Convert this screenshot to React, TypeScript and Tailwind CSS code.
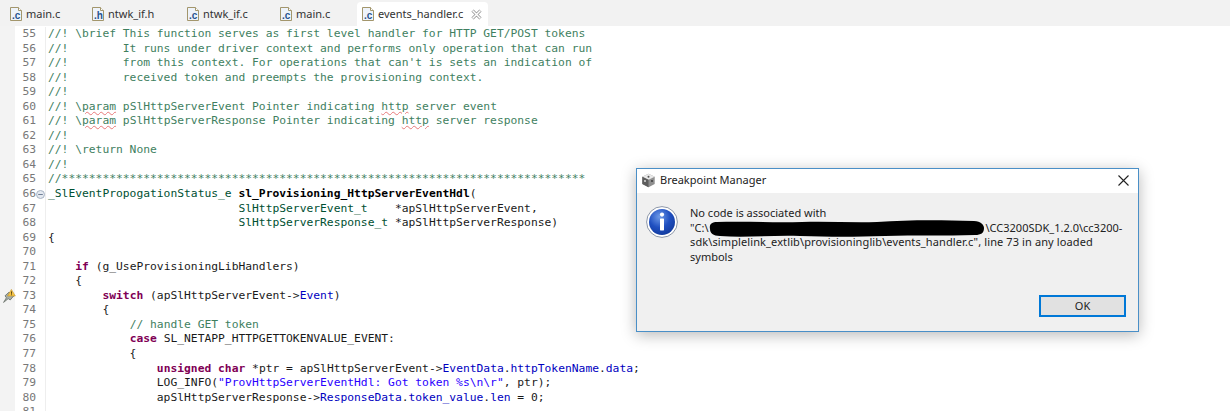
const MONO = "font-['DejaVu_Sans_Mono',monospace]"

type Tok = [string, string?]

const c = 'text-[#3f7f5f]'
const k = 'text-[#7f0055] font-bold'
const t = 'text-[#005032]'
const f = 'text-[#0000c0]'
const s = 'text-[#2a00ff]'
const b = 'text-black font-bold'
const sq = 'text-[#3f7f5f] underline decoration-wavy decoration-[#e87a7a] decoration-1'

const lines: { n: number; toks: Tok[] }[] = [
  { n: 55, toks: [["//! \\brief This function serves as first level handler for HTTP GET/POST tokens", c]] },
  { n: 56, toks: [["//!        It runs under driver context and performs only operation that can run", c]] },
  { n: 57, toks: [["//!        from this context. For operations that can't is sets an indication of", c]] },
  { n: 58, toks: [["//!        received token and preempts the provisioning context.", c]] },
  { n: 59, toks: [["//!", c]] },
  { n: 60, toks: [["//! \\", c], ["param", sq], [" pSlHttpServerEvent Pointer indicating ", c], ["http", sq], [" server event", c]] },
  { n: 61, toks: [["//! \\", c], ["param", sq], [" pSlHttpServerResponse Pointer indicating ", c], ["http", sq], [" server response", c]] },
  { n: 62, toks: [["//!", c]] },
  { n: 63, toks: [["//! \\return None", c]] },
  { n: 64, toks: [["//!", c]] },
  { n: 65, toks: [["//*****************************************************************************", c]] },
  { n: 66, toks: [["_SlEventPropogationStatus_e", t], [" "], ["sl_Provisioning_HttpServerEventHdl", b], ["("]] },
  { n: 67, toks: [["                            "], ["SlHttpServerEvent_t", t], ["    *apSlHttpServerEvent,"]] },
  { n: 68, toks: [["                            "], ["SlHttpServerResponse_t", t], [" *apSlHttpServerResponse)"]] },
  { n: 69, toks: [["{"]] },
  { n: 70, toks: [] },
  { n: 71, toks: [["    "], ["if", k], [" (g_UseProvisioningLibHandlers)"]] },
  { n: 72, toks: [["    {"]] },
  { n: 73, toks: [["        "], ["switch", k], [" (apSlHttpServerEvent->"], ["Event", f], [")"]] },
  { n: 74, toks: [["        {"]] },
  { n: 75, toks: [["            "], ["// handle GET token", c]] },
  { n: 76, toks: [["            "], ["case", k], [" SL_NETAPP_HTTPGETTOKENVALUE_EVENT:"]] },
  { n: 77, toks: [["            {"]] },
  { n: 78, toks: [["                "], ["unsigned", k], [" "], ["char", k], [" *ptr = apSlHttpServerEvent->"], ["EventData", f], ["."], ["httpTokenName", f], ["."], ["data", f], [";"]] },
  { n: 79, toks: [["                LOG_INFO("], ['"ProvHttpServerEventHdl: Got token %s\\n\\r"', s], [", ptr);"]] },
  { n: 80, toks: [["                apSlHttpServerResponse->"], ["ResponseData", f], ["."], ["token_value", f], ["."], ["len", f], [" = 0;"]] },
  { n: 81, toks: [] },
]

function FileIcon({ letter }: { letter: string }) {
  return (
    <svg width="12" height="14" viewBox="0 0 12 14" className="shrink-0">
      <path d="M0.5 0.5h8l3 3v10h-11z" fill="#eef3fa" stroke="#a3966c" />
      <path d="M8.5 0.5v3h3" fill="#fff" stroke="#a3966c" />
      <text x="2" y="11.5" fontFamily="Liberation Sans, sans-serif" fontSize="10" fontWeight="700" fill="#27548f">
        .{letter}
      </text>
    </svg>
  )
}

function Tab({ name, letter, width, active }: { name: string; letter: string; width: number; active?: boolean }) {
  return (
    <div
      className={
        active
          ? 'flex h-[24px] items-center gap-[4px] rounded-t-[4px] bg-white pl-[5px]'
          : 'flex h-[24px] items-center gap-[4px] pl-[10px]'
      }
      style={{ width }}
    >
      <FileIcon letter={letter} />
      <span className="text-[11px] text-[#333]">{name}</span>
      {active && (
        <svg width="11" height="11" viewBox="0 0 11 11" className="ml-[4px]" fill="none">
          <path d="M1.5 1.5l8 8M9.5 1.5l-8 8" stroke="#8c8c8c" strokeWidth="3" />
          <path d="M1.5 1.5l8 8M9.5 1.5l-8 8" stroke="#fff" strokeWidth="1.6" />
        </svg>
      )}
    </div>
  )
}

function LineMarker() {
  return (
    <svg width="13" height="14" viewBox="0 0 13 14" className="mr-[-1px] shrink-0">
      <path d="M0.6 13.4l2.8-4.6-1.4-2 4-3.6 4.6 3.8-3.4 4-2-1.4z" fill="#a7aea7" stroke="#6f766f" strokeWidth="0.9" />
      <path d="M8.4 0.4l3.9 6.6H4.5z" fill="#f6c445" stroke="#c4962a" strokeWidth="0.6" />
      <rect x="8" y="2.4" width="0.9" height="2.4" fill="#4a3a10" />
      <rect x="8" y="5.3" width="0.9" height="0.9" fill="#4a3a10" />
    </svg>
  )
}

function FoldIcon() {
  return (
    <svg width="9" height="9" viewBox="0 0 9 9" className="shrink-0">
      <circle cx="4.5" cy="4.5" r="4" fill="#e4e9f0" stroke="#a9b4c4" />
      <path d="M2.2 4.5h4.6" stroke="#6f7f96" />
    </svg>
  )
}

function InfoIcon() {
  return (
    <svg width="32" height="32" viewBox="0 0 32 32">
      <defs>
        <radialGradient id="infoBlue" cx="40%" cy="30%" r="75%">
          <stop offset="0%" stopColor="#6f9be8" />
          <stop offset="55%" stopColor="#1f4fc0" />
          <stop offset="100%" stopColor="#123a9c" />
        </radialGradient>
      </defs>
      <circle cx="16" cy="16" r="15.4" fill="#fff" stroke="#8d97a8" strokeWidth="1" />
      <circle cx="16" cy="16" r="13" fill="url(#infoBlue)" />
      <circle cx="16" cy="8.6" r="2.1" fill="#fff" />
      <rect x="14" y="12.4" width="4" height="12" rx="0.6" fill="#fff" />
    </svg>
  )
}

function AppIcon() {
  return (
    <svg width="15" height="15" viewBox="0 0 15 15">
      <path d="M7.5 0.8l6.2 3v7.2l-6.2 3.2-6.2-3.2V3.8z" fill="#8f8f8f" />
      <path d="M7.5 0.8l6.2 3-6.2 3-6.2-3z" fill="#e9e9e9" />
      <path d="M1.3 3.8l6.2 3v7.4l-6.2-3.2z" fill="#5d5d5d" />
      <circle cx="7.5" cy="3.8" r="1" fill="#555" />
      <circle cx="4" cy="8" r="0.9" fill="#e8e8e8" />
      <circle cx="11" cy="8" r="0.9" fill="#333" />
    </svg>
  )
}

function Scribble() {
  return (
    <svg width="275" height="17" viewBox="0 0 275 17" className="mx-[1px] shrink-0">
      <path
        d="M1 9C0 4 3 2 8 2c30-1 55 1 85 0 25-1 50 1 75 0 30-2 60-2 97-1 7 0 10 4 10 7 0 5-3 7-9 7-30 1-60 0-90 1-30 1-55 1-85 0-28-1-55 2-80 0C4 16 1 13 1 9z"
        fill="#000"
      />
    </svg>
  )
}

export default function App() {
  return (
    <div className="relative h-[411px] w-[1230px] overflow-hidden bg-white font-['Noto_Sans',sans-serif]">
      <div className="flex h-[26px] items-end bg-[#f2f2f2]">
        <Tab name="main.c" letter="c" width={82} />
        <Tab name="ntwk_if.h" letter="h" width={95} />
        <Tab name="ntwk_if.c" letter="c" width={93} />
        <Tab name="main.c" letter="c" width={87} />
        <Tab name="events_handler.c" letter="c" width={131} active />
      </div>

      <div className="flex">
        <div className="flex w-[15px] flex-col bg-[#f3f3f3] pt-[1px]">
          {lines.map((l) => (
            <div key={l.n} className="flex h-[14.56px] items-center justify-end">
              {l.n === 73 && <LineMarker />}
            </div>
          ))}
        </div>
        <div className={`flex flex-col pt-[1px] text-[11.3px] ${MONO}`}>
          {lines.map((l) => (
            <div key={l.n} className="flex h-[14.56px] items-center leading-[14.56px] whitespace-pre">
              <span className="w-[21px] text-right text-[#787878]">{l.n}</span>
              <span className="mr-[2px] flex h-full w-[10px] items-center border-r border-[#eeeeee]">
                {l.n === 66 && <FoldIcon />}
              </span>
              <span className="text-[#1a1a1a]">
                {l.toks.map((tok, i) => (
                  <span key={i} className={tok[1]}>
                    {tok[0]}
                  </span>
                ))}
              </span>
            </div>
          ))}
        </div>
      </div>

      {/* dialog sits over the editor */}
      <div className="absolute top-[168px] left-[636px] flex h-[164px] w-[503px] flex-col border border-[#4a8fc7] bg-[#f0f0f0] shadow-[0_3px_14px_rgba(0,0,0,0.28)]">
        <div className="flex h-[24px] items-center gap-[4px] bg-white pr-[9px] pb-[2px] pl-[4px] text-[11px] text-[#222]">
          <AppIcon />
          <span>Breakpoint Manager</span>
          <svg width="11" height="11" viewBox="0 0 11 11" className="ml-auto" fill="none" stroke="#222" strokeWidth="1.1">
            <path d="M0.5 0.5l10 10M10.5 0.5l-10 10" />
          </svg>
        </div>
        <div className="flex flex-1 flex-col pt-[13px] pr-[12px] pb-[14px] pl-[9px]">
          <div className="flex flex-1 gap-[12px]">
            <div className="shrink-0">
              <InfoIcon />
            </div>
            <div className="text-[11px] leading-[14.7px] whitespace-nowrap text-[#222]">
              <div>No code is associated with</div>
              <div className="flex h-[14.7px] items-center">
                <span>"C:\</span>
                <Scribble />
                <span>\CC3200SDK_1.2.0\cc3200-</span>
              </div>
              <div className="tracking-[0.11px]">sdk\simplelink_extlib\provisioninglib\events_handler.c", line 73 in any loaded</div>
              <div>symbols</div>
            </div>
          </div>
          <div className="flex justify-end">
            <button className="h-[22px] w-[87px] border-2 border-[#0078d7] bg-[#e1e1e1] text-[11px] text-[#222]">OK</button>
          </div>
        </div>
      </div>
    </div>
  )
}
